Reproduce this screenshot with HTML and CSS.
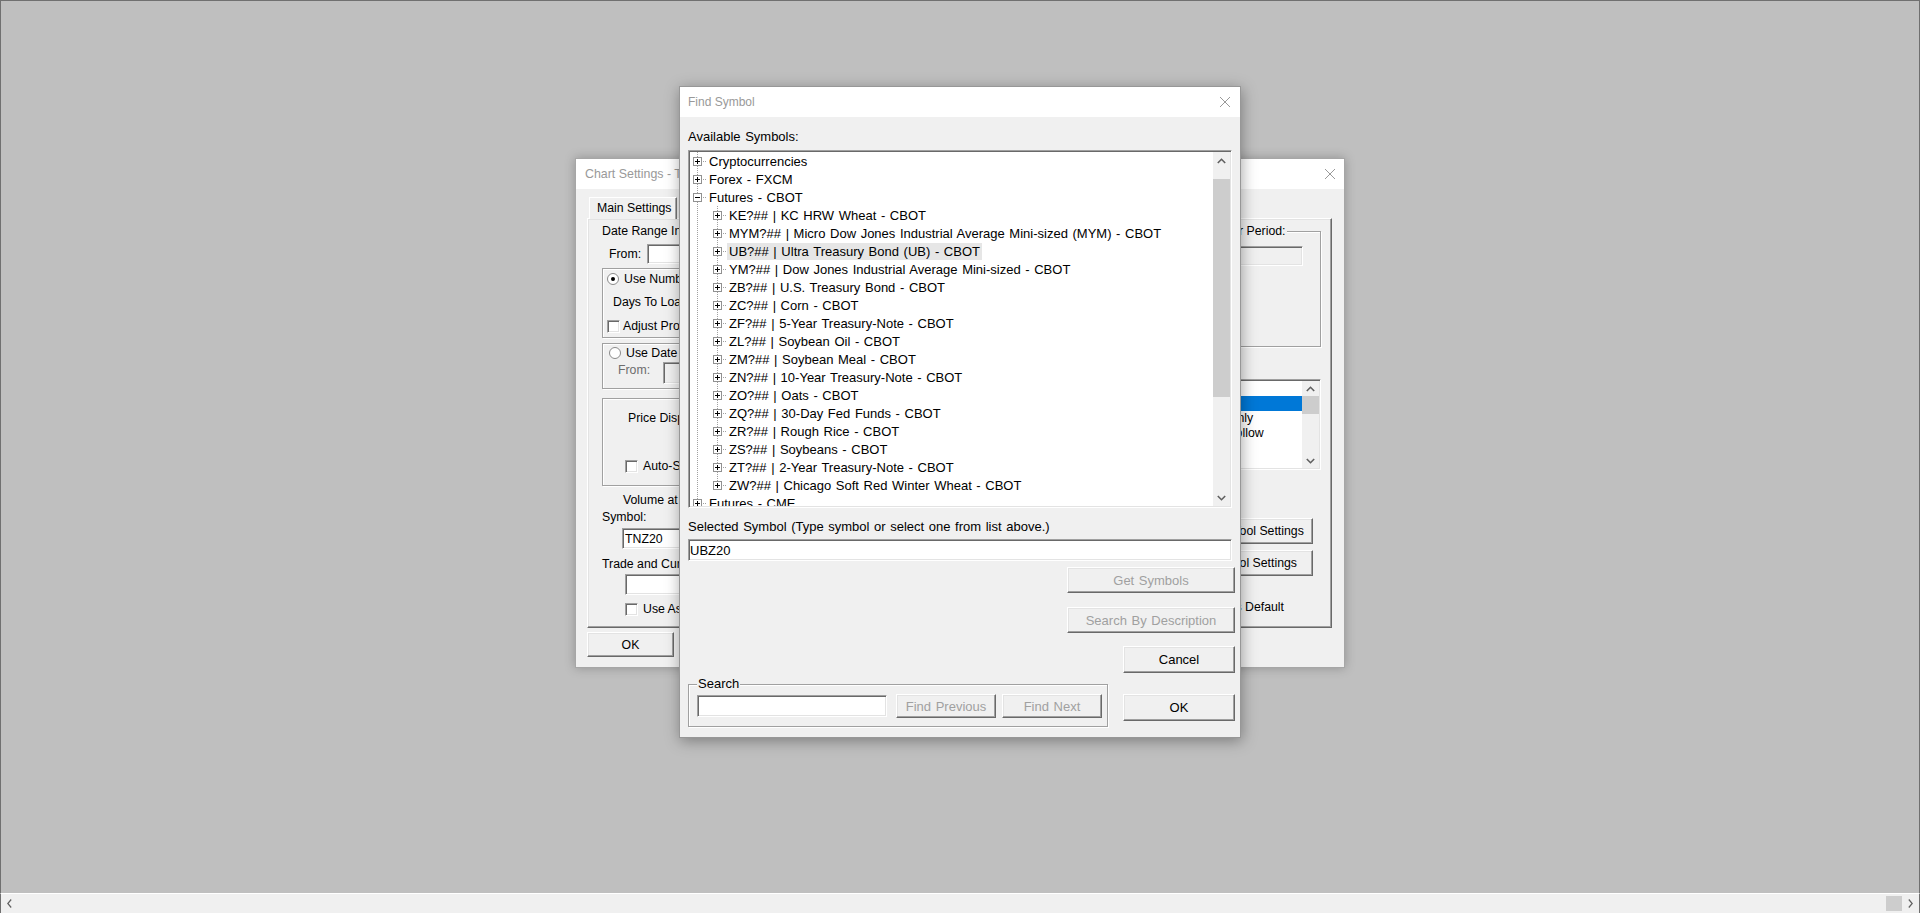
FILE: index.html
```html
<!DOCTYPE html>
<html lang="en">

<head>
    <meta charset="UTF-8">
    <title>Find Symbol</title>
    <link rel="stylesheet" href="styles.css">
</head>

<body>
    <div class="desktop">

        <!-- Chart Settings (behind) -->
        <div class="win chart">
            <div class="titlebar">
                <span>Chart Settings - TNZ20 - 1 Min</span>
                <svg class="close" width="10" height="10" viewBox="0 0 10 10"><path d="M0 0L10 10M10 0L0 10" stroke="#999" stroke-width="1"/></svg>
            </div>
            <div class="chart-body">
                <div class="tabs">
                    <div class="tab">Main Settings</div>
                </div>
                <div class="panel">
                    <div class="col-l">
                        <div class="caption">Date Range Information</div>
                        <div class="from-row">
                            <span class="caption">From:</span>
                            <div class="tb from-tb"></div>
                        </div>
                        <div class="grp g1">
                            <div class="opt"><span class="radio on"></span>Use Number of Days</div>
                            <div class="caption days">Days To Load:</div>
                            <div class="opt chk-opt"><span class="chk"></span>Adjust Prompt Time</div>
                        </div>
                        <div class="grp g2">
                            <div class="opt"><span class="radio"></span>Use Date Range</div>
                            <div class="from-row2">
                                <span class="caption dim">From:</span>
                                <div class="tb off from-tb2"></div>
                            </div>
                        </div>
                        <div class="grp g3">
                            <div class="caption">Price Display</div>
                            <div class="opt auto"><span class="chk"></span>Auto-Scale</div>
                        </div>
                        <div class="caption vol">Volume at Price</div>
                        <div class="caption sym">Symbol:</div>
                        <div class="tb sym-tb">TNZ20</div>
                        <div class="caption trade">Trade and Current Quote Symbol:</div>
                        <div class="tb trade-tb"></div>
                        <div class="opt use-as"><span class="chk"></span>Use As Default</div>
                    </div>

                    <div class="col-r">
                        <fieldset class="grp period">
                            <legend>Bar Period:</legend>
                            <div class="tb off period-tb"></div>
                        </fieldset>
                        <div class="listbox">
                            <div class="list-rows">
                                <div class="li">Bars</div>
                                <div class="li sel">Candle</div>
                                <div class="li">Close Only</div>
                                <div class="li">Trend Follow</div>
                            </div>
                            <div class="vs small">
                                <div class="arr"><svg width="9" height="6" viewBox="0 0 9 6"><polyline points="0.8,5 4.5,1.3 8.2,5" fill="none" stroke="#606060" stroke-width="1.6"/></svg></div>
                                <div class="track"><div class="thumb list-thumb"></div></div>
                                <div class="arr"><svg width="9" height="6" viewBox="0 0 9 6"><polyline points="0.8,1 4.5,4.7 8.2,1" fill="none" stroke="#606060" stroke-width="1.6"/></svg></div>
                            </div>
                        </div>
                        <div class="btn tool-btn first">Drawing Tool Settings</div>
                        <div class="btn tool-btn">Study Tool Settings</div>
                        <div class="opt set-default"><span class="chk"></span>Save As Default</div>
                    </div>
                </div>
                <div class="btn chart-ok">OK</div>
            </div>
        </div>

        <!-- Find Symbol -->
        <div class="win find">
            <div class="titlebar">
                <span>Find Symbol</span>
                <svg class="close" width="10" height="10" viewBox="0 0 10 10"><path d="M0 0L10 10M10 0L0 10" stroke="#999" stroke-width="1"/></svg>
            </div>
            <div class="find-body">
                <div class="caption avail">Available Symbols:</div>

                <div class="tree">
                    <div class="rows">
                        <div class="row l0"><span class="pm plus"></span><span class="cn"></span><span class="lb">Cryptocurrencies</span></div>
                        <div class="row l0"><span class="pm plus"></span><span class="cn"></span><span class="lb">Forex - FXCM</span></div>
                        <div class="row l0"><span class="pm"></span><span class="cn"></span><span class="lb">Futures - CBOT</span></div>
                        <div class="row l1"><span class="pm plus"></span><span class="cn"></span><span class="lb">KE?## | KC HRW Wheat - CBOT</span></div>
                        <div class="row l1"><span class="pm plus"></span><span class="cn"></span><span class="lb">MYM?## | Micro Dow Jones Industrial Average Mini-sized (MYM) - CBOT</span></div>
                        <div class="row l1"><span class="pm plus"></span><span class="cn"></span><span class="lb hover">UB?## | Ultra Treasury Bond (UB) - CBOT</span></div>
                        <div class="row l1"><span class="pm plus"></span><span class="cn"></span><span class="lb">YM?## | Dow Jones Industrial Average Mini-sized - CBOT</span></div>
                        <div class="row l1"><span class="pm plus"></span><span class="cn"></span><span class="lb">ZB?## | U.S. Treasury Bond - CBOT</span></div>
                        <div class="row l1"><span class="pm plus"></span><span class="cn"></span><span class="lb">ZC?## | Corn - CBOT</span></div>
                        <div class="row l1"><span class="pm plus"></span><span class="cn"></span><span class="lb">ZF?## | 5-Year Treasury-Note - CBOT</span></div>
                        <div class="row l1"><span class="pm plus"></span><span class="cn"></span><span class="lb">ZL?## | Soybean Oil - CBOT</span></div>
                        <div class="row l1"><span class="pm plus"></span><span class="cn"></span><span class="lb">ZM?## | Soybean Meal - CBOT</span></div>
                        <div class="row l1"><span class="pm plus"></span><span class="cn"></span><span class="lb">ZN?## | 10-Year Treasury-Note - CBOT</span></div>
                        <div class="row l1"><span class="pm plus"></span><span class="cn"></span><span class="lb">ZO?## | Oats - CBOT</span></div>
                        <div class="row l1"><span class="pm plus"></span><span class="cn"></span><span class="lb">ZQ?## | 30-Day Fed Funds - CBOT</span></div>
                        <div class="row l1"><span class="pm plus"></span><span class="cn"></span><span class="lb">ZR?## | Rough Rice - CBOT</span></div>
                        <div class="row l1"><span class="pm plus"></span><span class="cn"></span><span class="lb">ZS?## | Soybeans - CBOT</span></div>
                        <div class="row l1"><span class="pm plus"></span><span class="cn"></span><span class="lb">ZT?## | 2-Year Treasury-Note - CBOT</span></div>
                        <div class="row l1 last"><span class="pm plus"></span><span class="cn"></span><span class="lb">ZW?## | Chicago Soft Red Winter Wheat - CBOT</span></div>
                        <div class="row l0"><span class="pm plus"></span><span class="cn"></span><span class="lb">Futures - CME</span></div>
                        <div class="row l0"><span class="pm plus"></span><span class="cn"></span><span class="lb">Futures - COMEX</span></div>
                    </div>
                    <div class="vs">
                        <div class="arr"><svg width="9" height="6" viewBox="0 0 9 6"><polyline points="0.8,5 4.5,1.3 8.2,5" fill="none" stroke="#606060" stroke-width="1.6"/></svg></div>
                        <div class="track"><div class="thumb tree-thumb"></div></div>
                        <div class="arr"><svg width="9" height="6" viewBox="0 0 9 6"><polyline points="0.8,1 4.5,4.7 8.2,1" fill="none" stroke="#606060" stroke-width="1.6"/></svg></div>
                    </div>
                </div>

                <div class="caption sel-cap">Selected Symbol (Type symbol or select one from list above.)</div>
                <div class="tb sel-tb">UBZ20</div>

                <div class="lower">
                    <div class="btn off get-btn">Get Symbols</div>
                    <div class="btn off desc-btn">Search By Description</div>
                    <div class="bottom-row">
                        <fieldset class="grp search">
                            <legend>Search</legend>
                            <div class="search-row">
                                <div class="tb search-tb"></div>
                                <div class="btn off find-prev">Find Previous</div>
                                <div class="btn off find-next">Find Next</div>
                            </div>
                        </fieldset>
                        <div class="btn-col">
                            <div class="btn cancel-btn">Cancel</div>
                            <div class="btn ok-btn">OK</div>
                        </div>
                    </div>
                </div>
            </div>
        </div>
    </div>

    <!-- bottom scroll bar -->
    <div class="hscroll">
        <div class="arr"><svg width="5" height="9" viewBox="0 0 5 9"><polyline points="4.2,0.5 0.8,4.5 4.2,8.5" fill="none" stroke="#606060" stroke-width="1.2"/></svg></div>
        <div class="track"><div class="thumb"></div></div>
        <div class="arr"><svg width="5" height="9" viewBox="0 0 5 9"><polyline points="0.8,0.5 4.2,4.5 0.8,8.5" fill="none" stroke="#606060" stroke-width="1.2"/></svg></div>
    </div>
</body>

</html>
```

FILE: styles.css
```css
/* base */
* {
    box-sizing: border-box;
}

html,
body {
    margin: 0;
    padding: 0;
}

body {
    font-family: "Liberation Sans", Arial, sans-serif;
    font-size: 13px;
    color: #000;
    background-color: #bfbfbf;
    overflow: hidden;
}

.desktop {
    position: relative;
    height: 893px;
    background-color: #bfbfbf;
    border: 1px solid #707070;
    border-bottom: none;
}

/* windows */
.win {
    position: absolute;
    display: flex;
    flex-direction: column;
    background-color: #f0f0f0;
    border: 1px solid #a6a6a6;
    box-shadow: 0 0 10px rgba(0, 0, 0, 0.25);
}

.chart {
    left: 574px;
    top: 157px;
    width: 770px;
    height: 510px;
    font-size: 12.3px;
}

.find {
    left: 678px;
    top: 85px;
    width: 562px;
    height: 652px;
    font-size: 13px;
    word-spacing: 1px;
    border-color: #979797;
    box-shadow: 1px 3px 14px rgba(0, 0, 0, 0.35);
}

.titlebar {
    flex: none;
    height: 30px;
    background-color: #fff;
    color: #999;
    font-size: 12px;
    word-spacing: 0;
    display: flex;
    align-items: center;
    justify-content: space-between;
    padding: 0 9px;
    white-space: nowrap;
}

.chart .titlebar {
    font-size: 12.4px;
}

.find .titlebar {
    padding: 0 10px 0 8px;
}

.caption {
    line-height: 16px;
    white-space: nowrap;
}

.dim {
    color: #6d6d6d;
}

/* common controls */
.tb {
    height: 22px;
    background-color: #fff;
    border: 1px solid;
    border-color: #a0a0a0 #fff #fff #a0a0a0;
    box-shadow: inset 1px 1px #696969, inset -1px -1px #e3e3e3;
    padding: 0 2px;
    display: flex;
    align-items: center;
    white-space: nowrap;
}

.tb.off {
    background-color: #f0f0f0;
}

.btn {
    flex: none;
    height: 26px;
    background-color: #f0f0f0;
    border: 1px solid;
    border-color: #fff #696969 #696969 #fff;
    box-shadow: inset -1px -1px #a0a0a0, inset 1px 1px #e3e3e3;
    display: flex;
    align-items: center;
    justify-content: center;
    white-space: nowrap;
}

.btn.off {
    color: #a0a0a0;
}

.grp {
    border: 1px solid #a0a0a0;
    box-shadow: inset 1px 1px #fff, 1px 1px #fff;
}

fieldset.grp {
    margin: 0;
    min-width: 0;
}

fieldset.grp legend {
    padding: 0 1px;
    line-height: 16px;
    background-color: #f0f0f0;
    white-space: nowrap;
}

.opt {
    display: flex;
    align-items: center;
    line-height: 16px;
    white-space: nowrap;
}

.radio {
    position: relative;
    flex: none;
    width: 12px;
    height: 12px;
    margin-right: 5px;
    border-radius: 50%;
    border: 1px solid #8a8a8a;
    background-color: #fff;
}

.radio.on::after {
    content: "";
    position: absolute;
    left: 3px;
    top: 3px;
    width: 4px;
    height: 4px;
    border-radius: 50%;
    background-color: #000;
}

.chk {
    flex: none;
    width: 13px;
    height: 13px;
    margin-right: 5px;
    background-color: #fff;
    border: 1px solid;
    border-color: #a0a0a0 #fff #fff #a0a0a0;
    box-shadow: inset 1px 1px #696969, inset -1px -1px #e3e3e3;
}

/* scroll bars */
.vs {
    flex: none;
    width: 17px;
    display: flex;
    flex-direction: column;
    background-color: #f0f0f0;
}

.vs .arr {
    flex: none;
    height: 17px;
    display: flex;
    align-items: center;
    justify-content: center;
}

.vs.small .arr {
    height: 15px;
}

.vs .track {
    flex: 1;
}

.thumb {
    background-color: #cdcdcd;
}

.tree-thumb {
    margin-top: 10px;
    height: 218px;
}

.list-thumb {
    height: 18px;
}

.hscroll {
    height: 20px;
    display: flex;
    background-color: #f0f0f0;
    border-top: 1px solid #fff;
    border-left: 1px solid #707070;
    border-right: 1px solid #707070;
}

.hscroll .arr {
    flex: none;
    width: 17px;
    display: flex;
    align-items: center;
    justify-content: center;
}

.hscroll .track {
    flex: 1;
    display: flex;
    justify-content: flex-end;
    align-items: center;
}

.hscroll .thumb {
    width: 16px;
    height: 15px;
}

/* chart settings */
.chart-body {
    flex: 1;
    padding: 8px 12px 0 11px;
}

.tabs {
    position: relative;
    z-index: 1;
    display: flex;
    padding-left: 2px;
    margin-bottom: -1px;
}

.tab {
    width: 88px;
    height: 22px;
    padding: 0 7px;
    line-height: 21px;
    white-space: nowrap;
    overflow: hidden;
    background-color: #f0f0f0;
    border: 1px solid;
    border-color: #fff #696969 transparent #fff;
    border-bottom: none;
    box-shadow: inset -1px 0 #a0a0a0;
}

.panel {
    height: 410px;
    display: flex;
    justify-content: space-between;
    align-items: flex-start;
    padding: 4px 10px 0 14px;
    border: 1px solid;
    border-color: #fff #696969 #696969 #fff;
    box-shadow: inset -1px -1px #a0a0a0, inset 1px 1px #e3e3e3;
}

.col-l {
    width: 380px;
}

.from-row {
    display: flex;
    align-items: center;
    margin-top: 5px;
    padding-left: 7px;
}

.from-tb {
    width: 120px;
    height: 20px;
    margin-left: 6px;
}

.g1 {
    margin-top: 4px;
    padding: 2px 4px 3px;
}

.days {
    margin-top: 7px;
    margin-left: 6px;
}

.chk-opt {
    margin-top: 8px;
}

.chk-opt .chk {
    margin-right: 3px;
}

.g2 {
    margin-top: 5px;
    padding: 1px 4px 4px 6px;
}

.from-row2 {
    display: flex;
    align-items: flex-start;
    margin-top: 1px;
    padding-left: 9px;
}

.from-tb2 {
    width: 120px;
    margin-left: 13px;
}

.g3 {
    margin-top: 9px;
    padding: 11px 0 11px 25px;
}

.auto {
    margin-top: 32px;
    margin-left: -3px;
}

.vol {
    margin-top: 6px;
    margin-left: 21px;
}

.sym {
    margin-top: 1px;
}

.sym-tb {
    width: 130px;
    height: 21px;
    margin-top: 3px;
    margin-left: 20px;
}

.trade {
    margin-top: 7px;
}

.trade-tb {
    width: 130px;
    height: 21px;
    margin-top: 2px;
    margin-left: 23px;
}

.use-as {
    margin-top: 6px;
    margin-left: 23px;
}

.col-r {
    width: 340px;
    display: flex;
    flex-direction: column;
    align-items: flex-end;
}

.period {
    width: 113px;
    margin-top: 2px;
    padding: 7px 17px 80px 14px;
}

.period-tb {
    height: 20px;
}

.listbox {
    width: 136px;
    height: 91px;
    margin-top: 32px;
    display: flex;
    padding: 1px;
    background-color: #fff;
    border: 1px solid;
    border-color: #a0a0a0 #fff #fff #a0a0a0;
    box-shadow: inset 1px 1px #696969, inset -1px -1px #e3e3e3;
}

.list-rows {
    flex: 1;
    overflow: hidden;
}

.li {
    height: 15px;
    line-height: 15px;
    padding-left: 6px;
    white-space: nowrap;
}

.li.sel {
    background-color: #0078d7;
    color: #fff;
}

.tool-btn {
    width: 137px;
    margin-top: 6px;
    margin-right: 8px;
}

.tool-btn.first {
    margin-top: 48px;
}

.set-default {
    margin-top: 23px;
    margin-right: 37px;
}

.chart-ok {
    width: 87px;
    height: 25px;
    margin-top: 4px;
}

/* find symbol */
.find-body {
    flex: 1;
    display: flex;
    flex-direction: column;
    padding: 0 8px;
}

.avail {
    margin-top: 12px;
}

.tree {
    flex: none;
    height: 358px;
    margin-top: 5px;
    display: flex;
    padding: 1px;
    background-color: #fff;
    border: 1px solid;
    border-color: #a0a0a0 #fff #fff #a0a0a0;
    box-shadow: inset 1px 1px #696969, inset -1px -1px #e3e3e3;
}

.rows {
    flex: 1;
    overflow: hidden;
    background: repeating-linear-gradient(#a0a0a0 0 1px, transparent 1px 2px) 7px 0 / 1px 100% no-repeat;
}

.row {
    height: 18px;
    display: flex;
    align-items: center;
    white-space: pre;
}

.row.l0 {
    padding-left: 3px;
}

.row.l1 {
    padding-left: 23px;
    background: repeating-linear-gradient(#a0a0a0 0 1px, transparent 1px 2px) 27px 0 / 1px 18px no-repeat;
}

.row.l1.last {
    background-size: 1px 9px;
}

.pm {
    position: relative;
    flex: none;
    width: 9px;
    height: 9px;
    border: 1px solid #919191;
    background-color: #fff;
}

.pm::before {
    content: "";
    position: absolute;
    left: 1px;
    top: 3px;
    width: 5px;
    height: 1px;
    background-color: #000;
}

.pm.plus::after {
    content: "";
    position: absolute;
    left: 3px;
    top: 1px;
    width: 1px;
    height: 5px;
    background-color: #000;
}

.cn {
    flex: none;
    width: 5px;
    height: 1px;
    background: repeating-linear-gradient(to right, transparent 0 1px, #a0a0a0 1px 2px);
}

.lb {
    padding: 0 2px;
    line-height: 17px;
}

.lb.hover {
    background-color: #e6e6e6;
}

.sel-cap {
    margin-top: 11px;
}

.sel-tb {
    margin-top: 4px;
    padding-left: 1px;
}

.lower {
    flex: 1;
    display: flex;
    flex-direction: column;
    align-items: flex-end;
    margin-right: -3px;
    padding-bottom: 10px;
}

.get-btn,
.desc-btn {
    width: 168px;
}

.get-btn {
    margin-top: 6px;
}

.desc-btn {
    margin-top: 14px;
}

.bottom-row {
    align-self: stretch;
    display: flex;
    justify-content: space-between;
    align-items: flex-end;
}

.search {
    flex: none;
    width: 420px;
    padding: 2px 4px 8px 8px;
}

.search-row {
    display: flex;
    align-items: center;
}

.search-tb {
    flex: none;
    width: 190px;
}

.find-prev,
.find-next {
    width: 100px;
    height: 24px;
}

.find-prev {
    margin-left: 9px;
}

.find-next {
    margin-left: 6px;
}

.btn-col {
    display: flex;
    flex-direction: column;
    align-items: flex-end;
    padding-bottom: 6px;
}

.cancel-btn,
.ok-btn {
    width: 112px;
    height: 27px;
}

.cancel-btn {
    margin-top: 13px;
}

.ok-btn {
    margin-top: 21px;
}
```
